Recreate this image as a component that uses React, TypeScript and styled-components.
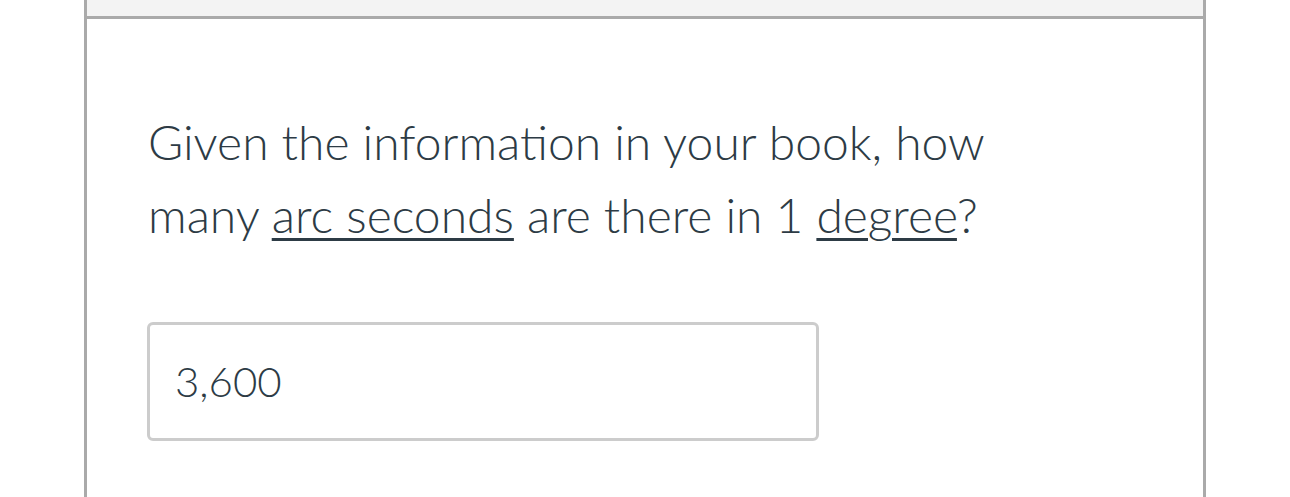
import styled, { createGlobalStyle } from "styled-components";

const GlobalStyle = createGlobalStyle`
  html, body {
    margin: 0;
    padding: 0;
    background: #ffffff;
  }
  body {
    font-family: Lato, "Liberation Sans", sans-serif;
    color: #2d3b45;
  }
`;

const Page = styled.div`
  width: 1290px;
  height: 497px;
  overflow: hidden;
  padding-left: 84px;
  box-sizing: border-box;
`;

const Card = styled.div`
  width: 1122px;
  box-sizing: border-box;
  border-left: 3px solid #aaaaaa;
  border-right: 3px solid #aaaaaa;
  min-height: 520px;
`;

const Header = styled.div`
  height: 16px;
  background: #f3f3f3;
  border-bottom: 3px solid #aaaaaa;
`;

const Body = styled.div`
  padding: 86px 61px 0;
`;

const Question = styled.p`
  margin: 0;
  font-size: 48px;
  font-weight: 300;
  line-height: 73px;
  width: 900px;
`;

const Term = styled.span`
  text-decoration: underline;
  text-decoration-thickness: 3px;
  text-underline-offset: 5px;
`;

const AnswerBox = styled.div`
  margin-top: 71px;
  margin-left: -1px;
  width: 672px;
  height: 119px;
  box-sizing: border-box;
  border: 3px solid #cccccc;
  border-radius: 6px;
  display: flex;
  align-items: center;
  padding-left: 25px;
  padding-bottom: 2px;
  font-size: 42px;
  font-weight: 300;
`;

export default function App() {
  return (
    <Page>
      <GlobalStyle />
      <Card>
        <Header />
        <Body>
          <Question>
            Given the information in your book, how many{" "}
            <Term>arc seconds</Term> are there in 1 <Term>degree</Term>?
          </Question>
          <AnswerBox>3,600</AnswerBox>
        </Body>
      </Card>
    </Page>
  );
}
